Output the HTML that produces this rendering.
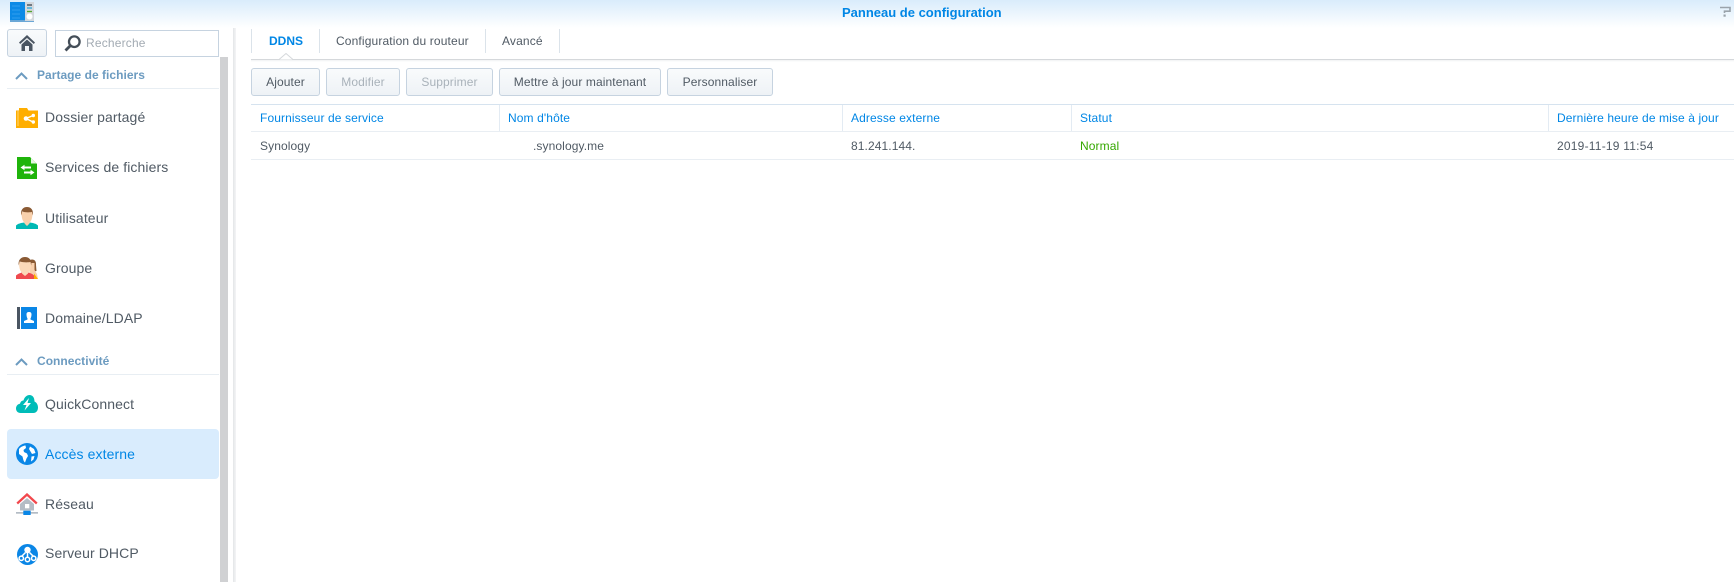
<!DOCTYPE html>
<html lang="fr"><head><meta charset="utf-8"><title>Panneau de configuration</title>
<style>
html,body{margin:0;padding:0;background:#fff}
body{position:relative;width:1734px;height:582px;overflow:hidden;font-family:"Liberation Sans",sans-serif;color:#505a64}
.a{position:absolute;white-space:nowrap}
.top{left:0;top:0;width:1734px;height:28px;background:linear-gradient(#d9ecfb,#ffffff)}
.title{left:842px;top:5px;font-size:13px;line-height:16px;font-weight:bold;color:#0086e5}
.sec{left:37px;font-size:12px;line-height:14px;font-weight:bold;color:#6c9bc0;letter-spacing:.03px}
.hr{left:7px;width:212px;height:1px;background:#e8eef3}
.it{left:45px;font-size:14px;line-height:18px;color:#505a64;letter-spacing:.1px}
.btn{box-sizing:border-box;height:28px;top:68px;border:1px solid #c6d3e0;border-radius:3px;background:linear-gradient(#f9fbfc,#eef2f6);font-size:12px;line-height:26px;text-align:center;color:#505a64;letter-spacing:.1px}
.dis{color:#a9b2ba}
.tab{top:33px;font-size:12px;line-height:16px;color:#505a64;letter-spacing:.14px}
.sep{top:29px;width:1px;height:24px;background:#dbe3ea}
.th{top:111px;font-size:12px;line-height:14px;color:#0086e5;letter-spacing:.11px}
.td{top:139px;font-size:12px;line-height:14px;color:#505a64;letter-spacing:.1px}
.cs{top:105px;width:1px;height:26px;background:#e3ebf3}
svg{position:absolute;display:block}
</style></head><body>
<div class="a top"></div>
<div class="a title">Panneau de configuration</div>

<svg style="left:10px;top:2px" width="24" height="20" viewBox="0 0 24 20"><rect x="0" y="0" width="15" height="19" fill="#0d8ae6"/><rect x="0" y="18" width="24" height="2" fill="#6aa7d6"/><rect x="15" y="0" width="9" height="19" fill="#d3d8dd"/><g stroke="#3ea6ef" stroke-width=".8"><path d="M2 4h8M2 8h8M2 12h8M2 16h8"/></g><path d="M17 3h5" stroke="#3a4652" stroke-width="1.300"/><path d="M17 6h5" stroke="#2fa8d8" stroke-width="1.300"/><path d="M17 9.500h5" stroke="#54a52e" stroke-width="1.300"/><circle cx="19.500" cy="14.500" r="3" fill="#fff"/></svg>
<svg style="left:1720px;top:6px" width="11" height="11" viewBox="0 0 11 11"><path d="M0 1.500H10V5.200H4.500V7" fill="none" stroke="#9aa3ab" stroke-width="1.600"/><rect x="3.500" y="8.500" width="2.200" height="2.200" fill="#9aa3ab"/></svg>

<div class="a" style="left:7px;top:29px;width:40px;height:28px;box-sizing:border-box;border:1px solid #c6d3e0;border-radius:3px;background:linear-gradient(#f9fbfc,#eef2f6)"></div>
<svg style="left:19px;top:35px" width="16" height="16" viewBox="0 0 16 16"><path d="M8 0L16 7.500L14.800 9L8 3L1.200 9L0 7.500Z" fill="#4a5562"/><path d="M8 4.500L13.500 9.500V16H10V11H6V16H2.500V9.500Z" fill="#4a5562"/></svg>
<div class="a" style="left:55px;top:30px;width:164px;height:27px;box-sizing:border-box;border:1px solid #c6d3e0;background:#fff"></div>
<svg style="left:64px;top:35px" width="17" height="17" viewBox="0 0 17 17"><circle cx="10.300" cy="6.700" r="5.300" fill="none" stroke="#444e58" stroke-width="2.300"/><path d="M6.500 10.500L1.500 15.500" stroke="#444e58" stroke-width="2.800"/></svg>
<div class="a" style="left:86px;top:36px;font-size:12px;line-height:15px;color:#a3abb3;letter-spacing:.18px">Recherche</div>

<div class="a" style="left:220px;top:57px;width:8px;height:525px;background:#d0d1d3"></div>
<div class="a" style="left:233px;top:28px;width:3px;height:554px;background:linear-gradient(90deg,#e4e6e8,#f4f5f6)"></div>

<svg style="left:15px;top:72px" width="13" height="8" viewBox="0 0 13 8"><path d="M1 7L6.500 1.500L12 7" fill="none" stroke="#6c9bc0" stroke-width="2"/></svg>
<div class="a sec" style="top:68px">Partage de fichiers</div>
<div class="a hr" style="top:88px"></div>

<svg style="left:16px;top:108px" width="22" height="20" viewBox="0 0 22 20"><path d="M0 2.500H3V0H11L12.500 2.500H22V20H0Z" fill="#ffae00"/><path d="M2 3V18" stroke="#ffd673" stroke-width="1"/><g stroke="#fff" stroke-width="1.300"><path d="M10 10.500L17 7.500M10 10.500L17 14"/></g><circle cx="10" cy="10.500" r="2.300" fill="#fff"/><circle cx="17.300" cy="7.500" r="1.700" fill="#fff"/><circle cx="17.300" cy="14" r="1.700" fill="#fff"/></svg>
<div class="a it" style="top:108px">Dossier partagé</div>

<svg style="left:17px;top:157px" width="20" height="22" viewBox="0 0 20 22"><path d="M0 0H13L20 7V22H0Z" fill="#1fb40b"/><path d="M14 1L19.500 6.500H14Z" fill="#e3f6df"/><path d="M3.500 10.500L7.500 7.800V9.500H14V11.500H7.500V13.200Z" fill="#fff"/><path d="M17.500 15.500L13.500 12.800V14.500H7V16.500H13.500V18.200Z" fill="#fff"/></svg>
<div class="a it" style="top:158px">Services de fichiers</div>

<svg style="left:16px;top:207px" width="22" height="22" viewBox="0 0 22 22"><path d="M0 22V18.500C2 16.500 5 16 8 15.500L11 18.500L14 15.500C17 16 20 16.500 22 18.500V22Z" fill="#00b8b4"/><path d="M5.500 5C5.500 11 6.500 14 8.500 15.500V16.500L11 19L13.500 16.500V15.500C15.500 14 16.500 11 16.500 5Z" fill="#f8d0ac"/><path d="M5.300 8.500C4.200 3 7 0 11 0S17.800 3 16.700 8.500L16 5C13.500 5.500 9 5.500 6 4.500Z" fill="#8a5a34"/></svg>
<div class="a it" style="top:209px">Utilisateur</div>

<svg style="left:16px;top:257px" width="22" height="22" viewBox="0 0 22 22"><path d="M14 3C17 1.500 20.500 3 20 8L20.500 14L15 15Z" fill="#8a5a34"/><path d="M15 6H18.500V13L21 17L22 22H17L13 17Z" fill="#f8d0ac"/><path d="M18 16.500L22 22H18Z" fill="#ffae00"/><path d="M0 22V18.500C1.500 17 4 16 6 15.500L9 18L12 15.500C14 16 17 17 18 18.500V22Z" fill="#ef4a4f"/><path d="M3 5C3 11 4 14 6 15.500V16.500L9 19L12 16.500V15.500C14 14 15 11 15 5Z" fill="#fbd9b9"/><path d="M2.800 8.500C1.700 3 5 0 9 0S16.300 3 15.200 8.500L14.500 5C12 5.500 7 5.500 3.500 4.500Z" fill="#8a5a34"/></svg>
<div class="a it" style="top:259px">Groupe</div>

<svg style="left:17px;top:307px" width="20" height="22" viewBox="0 0 20 22"><rect x="0" y="0" width="3" height="22" fill="#4a5562"/><rect x="4" y="0" width="16" height="22" fill="#0a86e6"/><path d="M9.500 7.500C9.500 5.500 10.500 5 12 5S14.500 5.500 14.500 7.500C14.500 9.500 13.800 11 13.500 11.500V12.500L17 14V16H7V14L10.500 12.500V11.500C10.200 11 9.500 9.500 9.500 7.500Z" fill="#fff"/></svg>
<div class="a it" style="top:309px">Domaine/LDAP</div>

<svg style="left:15px;top:358px" width="13" height="8" viewBox="0 0 13 8"><path d="M1 7L6.500 1.500L12 7" fill="none" stroke="#6c9bc0" stroke-width="2"/></svg>
<div class="a sec" style="top:354px">Connectivité</div>
<div class="a hr" style="top:374px"></div>

<svg style="left:16px;top:395px" width="22" height="18" viewBox="0 0 22 18"><path d="M4.500 18C1.800 18 0 16 0 13.500C0 11 1.800 9 4 8.800C4.500 6.500 6 5.500 7.500 5.500C8.500 2 10.800 0 13.500 0C16.500 0 18.500 2.500 18.500 6.500C20.800 7.500 22 10 22 12.500C22 15.800 20 18 17.500 18Z" fill="#00bcb8"/><path d="M13 3L7 10H10.500L8.500 15.500L15 8H11.500Z" fill="#fff"/></svg>
<div class="a it" style="top:395px">QuickConnect</div>

<div class="a" style="left:7px;top:429px;width:212px;height:50px;background:#d9ecfd;border-radius:4px"></div>
<svg style="left:16px;top:443px" width="22" height="22" viewBox="0 0 22 22"><circle cx="11" cy="11" r="11" fill="#0a86e6"/><path d="M3 6C5 3.500 8 2.500 9.500 2.500L10 5L7.500 7L8 9L11 10.500L12 13L10.500 15.500L9 19.500C7.500 18.500 7 15.500 6.500 13.500L3 11Z" fill="#fff"/><path d="M14 3.500L18 6L19.500 10L16 11L14.500 8.500L13 6ZM15.500 13.500L18.500 13L17.500 16.500L15 18.500Z" fill="#fff"/></svg>
<div class="a it" style="top:445px;color:#0086e5">Accès externe</div>

<svg style="left:16px;top:493px" width="22" height="22" viewBox="0 0 22 22"><path d="M1.200 10.500L11 1.500L20.800 10.500" fill="none" stroke="#f2484d" stroke-width="2.300"/><path d="M11 5L18 11V17.500H4V11Z" fill="#b4bcc5"/><rect x="9" y="11" width="4.300" height="4.300" fill="#fff"/><rect x="0" y="19" width="22" height="1.700" fill="#b4bcc5"/><rect x="7.300" y="17.700" width="7.400" height="4.300" fill="#0a86e6"/></svg>
<div class="a it" style="top:495px">Réseau</div>

<svg style="left:17px;top:544px" width="21" height="21" viewBox="0 0 21 21"><circle cx="10.500" cy="10.500" r="10.500" fill="#0a86e6"/><circle cx="10.500" cy="6" r="3.200" fill="#fff"/><g fill="none" stroke="#fff" stroke-width="1.500"><path d="M10.500 8V13M8.500 8.500L5 12M12.500 8.500L16 12"/><circle cx="4.300" cy="14.300" r="2.200"/><circle cx="10.500" cy="15.500" r="2.200"/><circle cx="16.700" cy="14.300" r="2.200"/></g></svg>
<div class="a it" style="top:544px">Serveur DHCP</div>

<div class="a sep" style="left:251px"></div>
<div class="a sep" style="left:319px"></div>
<div class="a sep" style="left:485px"></div>
<div class="a sep" style="left:559px"></div>
<div class="a tab" style="left:269px;font-weight:bold;color:#0086e5;letter-spacing:0">DDNS</div>
<div class="a tab" style="left:336px">Configuration du routeur</div>
<div class="a tab" style="left:502px">Avancé</div>
<div class="a" style="left:251px;top:59px;width:1483px;height:1px;background:#d5d8db"></div>
<div class="a" style="left:251px;top:60px;width:1483px;height:2px;background:linear-gradient(#f1f2f3,#fff)"></div>
<svg style="left:279px;top:53px" width="14" height="7" viewBox="0 0 14 7"><path d="M0 6.500L7 .5L14 6.500" fill="#fff" stroke="#d5d8db"/></svg>

<div class="a btn" style="left:251px;width:69px">Ajouter</div>
<div class="a btn dis" style="left:326px;width:74px">Modifier</div>
<div class="a btn dis" style="left:406px;width:87px">Supprimer</div>
<div class="a btn" style="left:499px;width:162px">Mettre à jour maintenant</div>
<div class="a btn" style="left:667px;width:106px">Personnaliser</div>

<div class="a" style="left:251px;top:104px;width:1483px;height:1px;background:#d6e3ef"></div>
<div class="a" style="left:251px;top:131px;width:1483px;height:1px;background:#e9eef3"></div>
<div class="a" style="left:251px;top:159px;width:1483px;height:1px;background:#e9eef3"></div>
<div class="a cs" style="left:499px"></div>
<div class="a cs" style="left:842px"></div>
<div class="a cs" style="left:1071px"></div>
<div class="a cs" style="left:1548px"></div>
<div class="a th" style="left:260px">Fournisseur de service</div>
<div class="a th" style="left:508px">Nom d'hôte</div>
<div class="a th" style="left:851px">Adresse externe</div>
<div class="a th" style="left:1080px">Statut</div>
<div class="a th" style="left:1557px">Dernière heure de mise à jour</div>
<div class="a td" style="left:260px">Synology</div>
<div class="a td" style="left:533px">.synology.me</div>
<div class="a td" style="left:851px">81.241.144.</div>
<div class="a td" style="left:1080px;color:#35a800">Normal</div>
<div class="a td" style="left:1557px;letter-spacing:.22px">2019-11-19 11:54</div>
</body></html>
